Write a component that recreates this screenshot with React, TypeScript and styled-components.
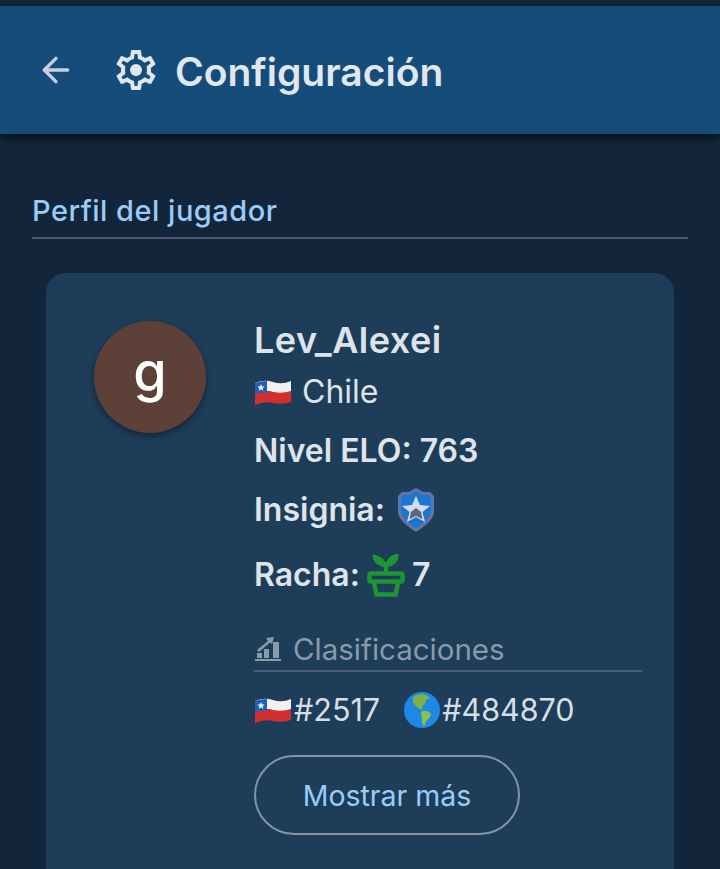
import React, { FC } from 'react';
import styled, { createGlobalStyle } from 'styled-components';
import { ArrowLeft } from 'lucide-react';

const GlobalStyle = createGlobalStyle`
  html, body {
    margin: 0;
    padding: 0;
    background: #12263a;
  }
  body {
    font-family: Inter, "Noto Sans", sans-serif;
  }
`;

const Page = styled.div`
  width: 720px;
  height: 869px;
  overflow: hidden;
  background: #12253a;
  padding-top: 6px;
  box-sizing: border-box;
`;

const AppBar = styled.header`
  height: 128px;
  background: #154c79;
  display: flex;
  align-items: center;
  padding-left: 36px;
  color: #e1e7ee;
  box-shadow: 0 3px 8px rgba(0, 0, 0, 0.7);
`;

const BackButton = styled.div`
  display: flex;
  color: #c9cfe2;
  margin-right: 36px;
`;

const GearBox = styled.div`
  display: flex;
  margin-right: 15px;
  color: #e1e7ee;
`;

const Title = styled.h1`
  margin: 3px 0 0;
  font-size: 39px;
  font-weight: 600;
  line-height: 44px;
`;

const Content = styled.main`
  padding: 58px 32px 0;
`;

const SectionTitle = styled.h2`
  margin: 0;
  font-size: 29px;
  letter-spacing: 0.5px;
  font-weight: 500;
  line-height: 38px;
  color: #9accf6;
  padding-bottom: 7px;
  border-bottom: 2px solid #47566a;
`;

const Card = styled.section`
  margin: 34px 14px 0;
  height: 640px;
  background: #1e3d59;
  border-radius: 20px;
  padding: 48px 32px 0 48px;
  display: flex;
  gap: 48px;
`;

const Avatar = styled.div`
  flex: none;
  width: 112px;
  height: 112px;
  border-radius: 50%;
  background: #5d4037;
  color: #fff;
  font-size: 54px;
  font-weight: 500;
  display: flex;
  align-items: center;
  justify-content: center;
  box-shadow: 0 3px 6px rgba(0, 0, 0, 0.4);
  padding-bottom: 12px;
  box-sizing: border-box;
`;

const Info = styled.div`
  flex: 1;
  display: flex;
  flex-direction: column;
  color: #dfe4ea;
`;

const Name = styled.div`
  font-size: 36px;
  letter-spacing: 0.5px;
  font-weight: 600;
  line-height: 38px;
`;

const Country = styled.div`
  display: flex;
  align-items: center;
  gap: 10px;
  margin-top: 14px;
  font-size: 32px;
  line-height: 38px;
`;

const StatRow = styled.div<{ $top: number }>`
  display: flex;
  align-items: center;
  gap: 7px;
  margin-top: ${({ $top }) => $top}px;
  font-size: 32px;
  font-weight: 600;
  line-height: 44px;
`;

const RankHeading = styled.div`
  display: flex;
  align-items: center;
  gap: 11px;
  margin-top: 33px;
  padding-bottom: 2px;
  font-size: 29.5px;
  line-height: 38px;
  color: #8a9aa9;
  border-bottom: 2px solid #4a6076;
`;

const RankRow = styled.div`
  display: flex;
  align-items: center;
  margin-top: 18px;
  font-size: 30.5px;
  line-height: 40px;
  color: #d6dee6;
`;

const RankItem = styled.span`
  display: flex;
  align-items: center;
  gap: 2px;
  margin-right: 24px;
`;

const OutlineButton = styled.button`
  align-self: flex-start;
  margin-top: 25px;
  width: 266px;
  height: 80px;
  border-radius: 40px;
  border: 2px solid #8494a3;
  background: transparent;
  color: #9accf6;
  font-family: inherit;
  font-size: 28.5px;
`;

const BadgeIcon = styled.svg`
  margin-left: 5px;
`;

const Gear: FC = () => (
  <svg width="48" height="48" viewBox="0 0 24 24" fill="currentColor">
    <path d="M19.43 12.98c.04-.32.07-.64.07-.98 0-.34-.03-.66-.07-.98l2.11-1.65c.19-.15.24-.42.12-.64l-2-3.46c-.09-.16-.26-.25-.44-.25-.06 0-.12.01-.17.03l-2.49 1c-.52-.4-1.08-.73-1.69-.98l-.38-2.65C14.46 2.18 14.25 2 14 2h-4c-.25 0-.46.18-.49.42l-.38 2.65c-.61.25-1.17.59-1.69.98l-2.49-1c-.06-.02-.12-.03-.18-.03-.17 0-.34.09-.43.25l-2 3.46c-.13.22-.07.49.12.64l2.11 1.65c-.04.32-.07.65-.07.98 0 .33.03.66.07.98l-2.11 1.65c-.19.15-.24.42-.12.64l2 3.46c.09.16.26.25.44.25.06 0 .12-.01.17-.03l2.49-1c.52.4 1.08.73 1.69.98l.38 2.65c.03.24.24.42.49.42h4c.25 0 .46-.18.49-.42l.38-2.65c.61-.25 1.17-.59 1.69-.98l2.49 1c.06.02.12.03.18.03.17 0 .34-.09.43-.25l2-3.46c.12-.22.07-.49-.12-.64l-2.11-1.65zm-1.98-1.71c.04.31.05.52.05.73 0 .21-.02.43-.05.73l-.14 1.13.89.7 1.08.84-.7 1.21-1.27-.51-1.04-.42-.9.68c-.43.32-.84.56-1.25.73l-1.06.43-.16 1.13-.2 1.35h-1.4l-.19-1.35-.16-1.13-1.06-.43c-.43-.18-.83-.41-1.23-.71l-.91-.7-1.06.43-1.27.51-.7-1.21 1.08-.84.89-.7-.14-1.13c-.03-.31-.05-.54-.05-.74s.02-.43.05-.73l.14-1.13-.89-.7-1.08-.84.7-1.21 1.27.51 1.04.42.9-.68c.43-.32.84-.56 1.25-.73l1.06-.43.16-1.13.2-1.35h1.39l.19 1.35.16 1.13 1.06.43c.43.18.83.41 1.23.71l.91.7 1.06-.43 1.27-.51.7 1.21-1.07.85-.89.7.14 1.13z" />
    <circle cx="12" cy="12" r="3" />
  </svg>
);

const ChileFlag: FC = () => (
  <svg width="38" height="28" viewBox="0 0 38 28">
    <path d="M1 5 Q10 1 19 4 T37 3 V14 Q28 17 19 14 T1 16 Z" fill="#f1f1f1" />
    <path d="M1 15 Q10 12 19 14 T37 13 V24 Q28 27 19 25 T1 27 Z" fill="#d32f2f" />
    <path d="M1 5 Q6 3 13 3 V15 Q6 14 1 16 Z" fill="#1e5fb8" />
    <path d="M7 6 l1 2.4 2.6 .1 -2 1.7 .7 2.5 -2.3-1.4 -2.3 1.4 .7-2.5 -2-1.7 2.6-.1 Z" fill="#fff" />
  </svg>
);

const Globe: FC = () => (
  <svg width="36" height="36" viewBox="0 0 36 36">
    <circle cx="18" cy="18" r="18" fill="#1e88e5" />
    <path d="M9 5 Q14 1 22 3 L26 6 Q20 8 21 12 Q17 14 18 18 Q14 17 11 13 Q8 10 9 5 Z" fill="#7cb342" />
    <path d="M18 19 Q24 18 27 22 Q26 27 22 29 L20 35 Q17 30 18 25 Q16 22 18 19 Z" fill="#8bc34a" />
  </svg>
);

const Badge: FC = () => (
  <BadgeIcon width="38" height="46" viewBox="0 0 38 46">
    <path d="M19 1 L26 5 L33 5 L37 9 V26 Q36 34 19 45 Q2 34 1 26 V9 L5 5 L12 5 Z" fill="#6472a8" />
    <path d="M19 4 L25 8 L32 8 L34 11 V25 Q33 32 19 41 Q5 32 4 25 V11 L6 8 L13 8 Z" fill="#1976d2" />
    <path d="M19 9 L23 18 L33 19 L25.5 25 L28 35 L19 30 L10 35 L12.5 25 L5 19 L15 18 Z" fill="#d5dae6" />
    <path d="M19 21 L24 25 L25.5 32 L19 29 L12.5 32 L14 25 Z" fill="#5a667c" />
  </BadgeIcon>
);

const Sprout: FC = () => (
  <svg width="38" height="43" viewBox="0 0 38 43" fill="none" stroke="#1f9433" strokeWidth="4.5">
    <path d="M19 19 V8" />
    <path d="M19 13 Q19 2 31 0 Q32 11 19 13 Z" fill="#1f9433" strokeWidth="1" />
    <path d="M19 13 Q19 3 6 1 Q6 11 19 13 Z" fill="#1f9433" strokeWidth="1" />
    <rect x="2.5" y="19.5" width="33" height="8" rx="1.5" />
    <path d="M6.5 27 L9.5 40.5 H28.5 L31.5 27" />
  </svg>
);

const Chart: FC = () => (
  <svg width="28" height="26" viewBox="0 0 28 26" fill="#8a9aa9">
    <rect x="3" y="17" width="5" height="5" />
    <rect x="10" y="13" width="5" height="9" />
    <rect x="19" y="6" width="6" height="16" />
    <rect x="1" y="23" width="26" height="2" />
    <path d="M3 14 L14 5 L12 2 L20 1 L18 8 L16 6.5 L5 16 Z" />
  </svg>
);

const App: FC = () => (
  <Page>
    <GlobalStyle />
    <AppBar>
      <BackButton>
        <ArrowLeft size={40} strokeWidth={2} />
      </BackButton>
      <GearBox>
        <Gear />
      </GearBox>
      <Title>Configuración</Title>
    </AppBar>
    <Content>
      <SectionTitle>Perfil del jugador</SectionTitle>
      <Card>
        <Avatar>g</Avatar>
        <Info>
          <Name>Lev_Alexei</Name>
          <Country>
            <ChileFlag />
            Chile
          </Country>
          <StatRow $top={18}>Nivel ELO: 763</StatRow>
          <StatRow $top={14}>
            Insignia: <Badge />
          </StatRow>
          <StatRow $top={20}>
            Racha: <Sprout /> 7
          </StatRow>
          <RankHeading>
            <Chart />
            Clasificaciones
          </RankHeading>
          <RankRow>
            <RankItem>
              <ChileFlag />
              #2517
            </RankItem>
            <RankItem>
              <Globe />
              #484870
            </RankItem>
          </RankRow>
          <OutlineButton>Mostrar más</OutlineButton>
        </Info>
      </Card>
    </Content>
  </Page>
);

export default App;
